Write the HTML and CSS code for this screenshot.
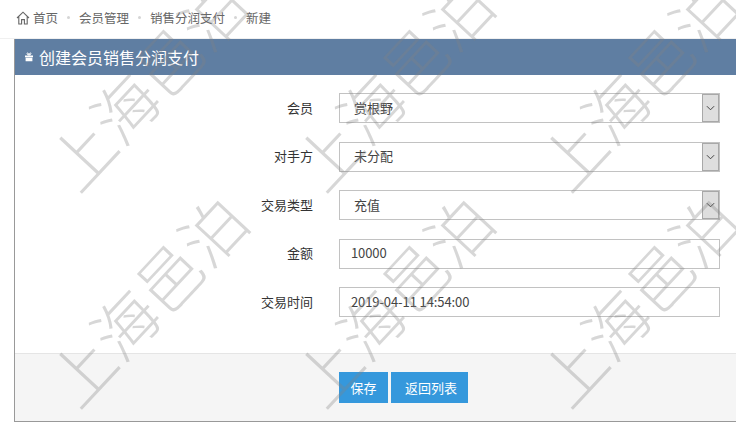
FILE: index.html
```html
<!DOCTYPE html>
<html lang="zh-CN">
<head>
<meta charset="utf-8">
<title>创建会员销售分润支付</title>
<link rel="stylesheet" href="styles.css">
</head>
<body>
<nav class="crumbs">
  <svg class="home" viewBox="0 0 14 14" width="14" height="14"><path d="M1 7 7 1.2 13 7M2.8 5.6V13H5.6V8.6H8.4V13H11.2V5.6" fill="none" stroke="#666" stroke-width="1.1"/></svg>
  <span>首页</span><i class="dot"></i><span>会员管理</span><i class="dot"></i><span>销售分润支付</span><i class="dot"></i><span>新建</span>
</nav>
<section class="panel">
  <header class="panel-head">
    <svg class="gift" viewBox="0 0 10 10" width="10" height="10"><path d="M1 3.4H9V5.2H1ZM1.6 5.8H8.4V9.2H1.6Z" fill="#fff"/><path d="M5 3C3 3 2.4 1 3.6 1 4.4 1 5 2 5 3 5 2 5.6 1 6.4 1 7.6 1 7 3 5 3Z" fill="none" stroke="#fff"/></svg>
    <h1>创建会员销售分润支付</h1>
  </header>
  <form class="form">
    <div class="row"><label>会员</label>
      <div class="select"><select><option>赏根野</option></select><span class="arrow"><svg viewBox="0 0 10 6" width="9" height="6"><path d="M1 1 5 5 9 1" fill="none" stroke="#333"/></svg></span></div></div>
    <div class="row"><label>对手方</label>
      <div class="select"><select><option>未分配</option></select><span class="arrow"><svg viewBox="0 0 10 6" width="9" height="6"><path d="M1 1 5 5 9 1" fill="none" stroke="#333"/></svg></span></div></div>
    <div class="row"><label>交易类型</label>
      <div class="select"><select><option>充值</option></select><span class="arrow"><svg viewBox="0 0 10 6" width="9" height="6"><path d="M1 1 5 5 9 1" fill="none" stroke="#333"/></svg></span></div></div>
    <div class="row"><label>金额</label><input class="field" value="10000"></div>
    <div class="row"><label>交易时间</label><input class="field" value="2019-04-11 14:54:00"></div>
  </form>
  <footer class="actions">
    <button class="btn save" type="button">保存</button>
    <button class="btn back" type="button">返回列表</button>
  </footer>
</section>
<div class="marks" aria-hidden="true">
  <span>上海邑泊</span><span>上海邑泊</span><span>上海邑泊</span>
  <span>上海邑泊</span><span>上海邑泊</span><span>上海邑泊</span>
</div>
</body>
</html>
```
FILE: styles.css
```css
* { box-sizing: border-box; }
html, body { margin: 0; height: 435px; overflow: hidden; background: #fff; }
body {
  position: relative;
  width: 736px;
  font-family: "Noto Sans CJK SC", "Liberation Sans", sans-serif;
  font-size: 13px;
  color: #333;
}
.crumbs {
  height: 39px;
  padding: 0 0 3px 16px;
  display: flex;
  align-items: center;
  font-size: 12.5px;
  color: #666;
  border-bottom: 1px solid #f0f0f0;
}
.home { margin-right: 3px; }
.dot { width: 3px; height: 3px; border-radius: 50%; background: #d5d5d5; margin: 0 9px; }
.panel {
  margin-left: 14px;
  height: 383px;
  display: flex;
  flex-direction: column;
  border-left: 1px solid #999;
  border-bottom: 1px solid #999;
}
.panel-head {
  height: 36px;
  flex: none;
  display: flex;
  align-items: center;
  gap: 5px;
  padding: 0 0 1px 9px;
  background: #5f7ea2;
  color: #fff;
}
.panel-head h1 { margin: 0; font-size: 16px; font-weight: 400; }
.form { flex: 1; padding-top: 18px; }
.row { display: flex; align-items: center; height: 30px; margin-bottom: 18.5px; }
.row label { width: 298px; padding-bottom: 2px; text-align: right; color: #333; }
.select, .field { margin-left: 26px; width: 381px; height: 100%; }
.select { position: relative; }
.select select {
  appearance: none;
  width: 100%;
  height: 100%;
  padding: 0 0 2px 14px;
  border: 1px solid #c2c2c2;
  border-radius: 0;
  background: #fff;
  font: inherit;
  color: #444;
}
.arrow {
  position: absolute;
  top: 1px;
  right: 1px;
  bottom: 1px;
  width: 17px;
  display: flex;
  align-items: center;
  justify-content: center;
  background: #dedede;
  border: 1px solid #a8a8a8;
}
.field {
  padding: 0 11px 2px;
  border: 1px solid #c2c2c2;
  border-radius: 0;
  font: inherit;
  letter-spacing: -0.1px;
  color: #444;
  outline: none;
}
.actions {
  flex: none;
  height: 68px;
  display: flex;
  gap: 3px;
  padding: 18px 0 0 324px;
  background: #f5f5f5;
  border-top: 1px solid #e5e5e5;
}
.btn {
  height: 31px;
  padding: 0;
  border: 0;
  background: #3598dc;
  color: #fff;
  font: inherit;
}
.save { width: 49px; }
.back { width: 77px; padding-left: 3px; }
.marks {
  position: absolute;
  inset: 0;
  display: grid;
  grid-template-columns: repeat(3, 245.5px);
  grid-auto-rows: 216px;
  pointer-events: none;
  overflow: hidden;
}
.marks span {
  width: 290px;
  margin: 113px 0 0 45px;
  height: 68px;
  line-height: 68px;
  font-size: 64px;
  font-weight: 300;
  white-space: nowrap;
  color: rgba(130, 130, 130, .32);
  transform-origin: 40px 34px;
  transform: rotate(-47deg);
}
```
